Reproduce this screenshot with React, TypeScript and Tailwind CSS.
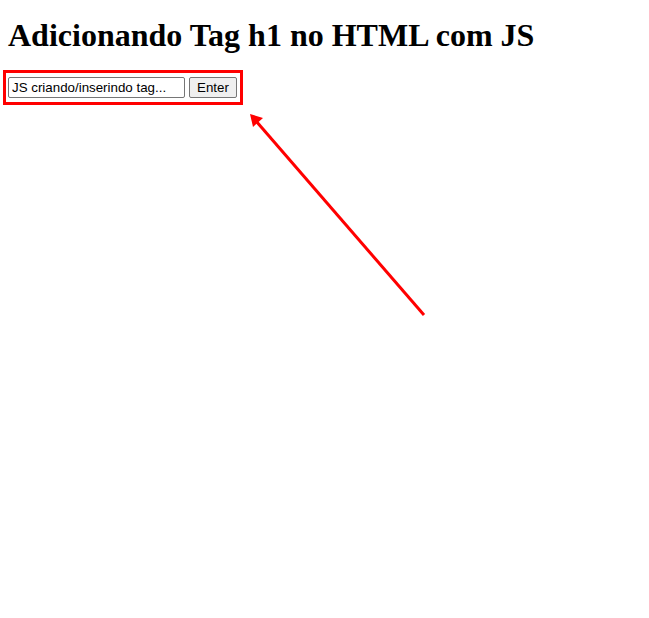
export default function App() {
  return (
    <div className="relative min-h-[618px] w-[649px] overflow-hidden bg-white">
      <h1 className="mx-2 mt-[17px] mb-0 font-['Liberation_Serif',serif] text-[32px] leading-[37px] font-bold text-black">
        Adicionando Tag h1 no HTML com JS
      </h1>

      {/* caixa vermelha em volta do input */}
      <div className="mt-[16px] ml-[3px] inline-flex items-center gap-[4px] border-[3px] border-[#ff0000] py-[4px] pr-[3px] pl-[2px]">
        <input
          type="text"
          defaultValue="JS criando/inserindo tag..."
          className="h-[21px] w-[177px] rounded-[2px] border border-[#767676] px-[3px] font-['Liberation_Sans',Arial,sans-serif] text-[13.33px] text-black outline-none"
        />
        <button
          type="button"
          className="h-[21px] w-[48px] rounded-[2px] border border-[#767676] bg-[#efefef] font-['Liberation_Sans',Arial,sans-serif] text-[13.33px] text-black"
        >
          Enter
        </button>
      </div>

      {/* seta */}
      <svg
        className="pointer-events-none absolute top-0 left-0"
        width="649"
        height="618"
        viewBox="0 0 649 618"
      >
        <line
          x1="424"
          y1="315"
          x2="256"
          y2="121"
          stroke="#ff0000"
          strokeWidth="3"
        />
        <polygon points="250,114 253,127 263,118" fill="#ff0000" />
      </svg>
    </div>
  );
}
